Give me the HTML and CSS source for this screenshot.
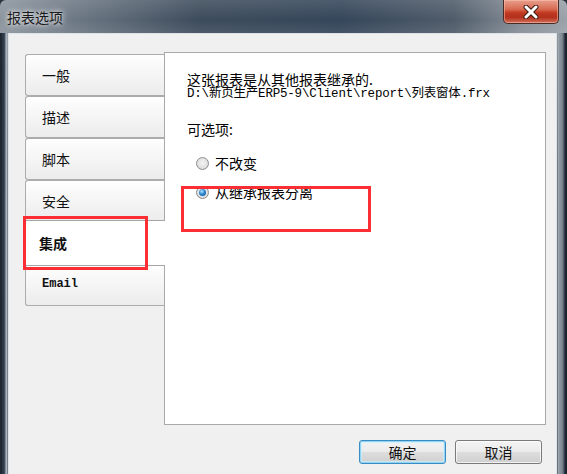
FILE: index.html
```html
<!DOCTYPE html>
<html lang="zh">
<head>
<meta charset="utf-8">
<title>报表选项</title>
<link rel="stylesheet" href="styles.css">
</head>
<body>
<div class="window">
  <div class="titlebar">
    <span class="title">报表选项</span>
    <div class="close-btn">
      <svg width="20" height="14" viewBox="0 0 20 14"><path d="M5 2 L15 12 M15 2 L5 12" stroke="#3a1a14" stroke-width="5" stroke-linecap="round"/><path d="M5 2 L15 12 M15 2 L5 12" stroke="#ffffff" stroke-width="3" stroke-linecap="round"/></svg>
    </div>
  </div>
  <div class="frame">
    <div class="client">
      <div class="main">
        <div class="tabs">
          <div class="tab">一般</div>
          <div class="tab">描述</div>
          <div class="tab">脚本</div>
          <div class="tab">安全</div>
          <div class="tab selected">集成</div>
          <div class="tab email">Email</div>
          <div class="mark mark-tab"></div>
        </div>
        <div class="panel">
          <div class="line1">这张报表是从其他报表继承的.</div>
          <div class="line2">D:\新页生产ERP5-9\Client\report\列表窗体.frx</div>
          <div class="label">可选项:</div>
          <div class="option"><span class="radio"></span><span>不改变</span></div>
          <div class="option"><span class="radio checked"></span><span>从继承报表分离</span></div>
          <div class="mark mark-opt"></div>
        </div>
      </div>
      <div class="buttons">
        <div class="btn default">确定</div>
        <div class="btn">取消</div>
      </div>
    </div>
  </div>
</div>
</body>
</html>
```
FILE: styles.css
```css
html, body {
  margin: 0;
  padding: 0;
  background: #2a3440;
}
body {
  font-family: "Noto Sans CJK SC", "Liberation Sans", sans-serif;
  font-size: 14px;
  color: #000;
}
.window {
  width: 567px;
  height: 474px;
  display: flex;
  flex-direction: column;
  overflow: hidden;
  border-radius: 6px 6px 0 0;
  background: linear-gradient(to right, #8c959e 0%, #6f7a86 12%, #3d4c5c 35%, #35465a 60%, #4f5c6a 80%, #868e97 92%, #9aa1a8 100%);
}
.titlebar {
  height: 33px;
  flex: none;
  display: flex;
  align-items: flex-start;
  background: linear-gradient(to bottom, rgba(255,255,255,0.12), rgba(255,255,255,0) 60%, rgba(255,255,255,0.08));
}
.title {
  margin: 8px 0 0 7px;
  line-height: 18px;
  font-size: 14px;
  color: #1b1b1b;
  text-shadow: 0 0 4px rgba(255,255,255,0.9), 0 0 8px rgba(255,255,255,0.7);
}
.close-btn {
  margin-left: auto;
  margin-right: 8px;
  width: 54px;
  height: 23px;
  border: 1px solid #4a2a26;
  border-top: none;
  border-radius: 0 0 5px 5px;
  background: linear-gradient(to bottom, #e8a08e 0%, #d86a52 40%, #c23b22 55%, #b3301b 75%, #d2715c 100%);
  box-shadow: inset 0 0 0 1px rgba(255,200,180,0.5);
  display: flex;
  align-items: center;
  justify-content: center;
}
.frame {
  flex: 1;
  display: flex;
  background:
    linear-gradient(to right, #1e2732 0px, #1e2732 2px, #3b4756 3px, #222c38 4px, #5f6d7c 5px, #97a3ae 6px, #c2c9cf 7px, transparent 8px),
    linear-gradient(to left, #1d2630 0px, #1d2630 2px, #4a5562 3px, #7f8993 5px, #8f98a1 8px, #aab1b8 9px, transparent 10px),
    linear-gradient(to bottom, #707b87, #3a4654 30%, #2a3542 100%);
}
.client {
  margin-left: 8px;
  width: 547px;
  background: #f0f0f0;
  border: 1px solid #dde2e7;
  border-bottom: none;
  display: flex;
  flex-direction: column;
}
.main {
  display: flex;
  padding-top: 18px;
}
.tabs {
  position: relative;
  width: 139px;
  margin-left: 16px;
  padding-top: 2px;
  flex: none;
}
.tab {
  height: 40px;
  border: 1px solid #acacac;
  border-right: none;
  border-radius: 3px 0 0 3px;
  background: linear-gradient(to bottom, #fefefe, #ececec);
  display: flex;
  align-items: center;
  padding-left: 16px;
  color: #111;
}
.tab.selected {
  height: 44px;
  margin: -2px -1px -2px -2px;
  padding-left: 15px;
  background: #fff;
  font-weight: bold;
  border-color: #a5a5a5;
  position: relative;
  z-index: 2;
}
.tab.email {
  font-family: "Liberation Mono", monospace;
  font-weight: bold;
  font-size: 12px;
  align-items: flex-start;
  padding-top: 12px;
  height: 28px;
}
.panel {
  position: relative;
  height: 371px;
  width: 380px;
  background: #fff;
  border: 1px solid #a9a9a9;
}
.line1 {
  margin: 19px 0 0 22px;
  font-size: 14px;
  line-height: 15px;
}
.line2 {
  margin-left: 22px;
  font-family: "Liberation Mono", "Noto Sans CJK SC", monospace;
  font-size: 12.5px;
  line-height: 14px;
  letter-spacing: -0.2px;
}
.label {
  margin: 21px 0 0 22px;
  line-height: 15px;
}
.option {
  display: flex;
  align-items: center;
  height: 20px;
  margin: 16px 0 0 31px;
  gap: 6px;
}
.option + .option {
  margin-top: 9px;
}
.radio {
  width: 11px;
  height: 11px;
  border: 1px solid #8a8d90;
  border-radius: 50%;
  background: radial-gradient(circle at 50% 45%, #f4f4f4 0%, #e2e2e2 55%, #cdcdcd 100%);
  display: flex;
  align-items: center;
  justify-content: center;
}
.radio.checked::after {
  content: "";
  width: 7px;
  height: 7px;
  border-radius: 50%;
  background: radial-gradient(circle at 40% 35%, #b8e6ff 0%, #2a86d0 45%, #0d4e8f 100%);
}
.mark {
  position: absolute;
  border: 3px solid #fb2f33;
  box-sizing: border-box;
  z-index: 5;
}
.mark-tab {
  left: -2px;
  top: 164px;
  width: 125px;
  height: 54px;
}
.mark-opt {
  left: 16px;
  top: 133px;
  width: 190px;
  height: 46px;
}
.buttons {
  display: flex;
  justify-content: flex-end;
  gap: 9px;
  margin-top: 15px;
  padding-right: 14px;
}
.btn {
  width: 85px;
  height: 22px;
  border: 1px solid #7a7a7a;
  border-radius: 3px;
  background: linear-gradient(to bottom, #f3f3f3 0%, #ebebeb 48%, #dddddd 52%, #cfcfcf 100%);
  box-shadow: inset 0 0 0 1px rgba(255,255,255,0.7);
  display: flex;
  align-items: center;
  justify-content: center;
  font-size: 14px;
  color: #111;
}
.btn.default {
  border-color: #3c8ac2;
  box-shadow: inset 0 0 0 1px #8fd6f5, inset 0 0 0 2px rgba(200,240,255,0.6);
}
```
